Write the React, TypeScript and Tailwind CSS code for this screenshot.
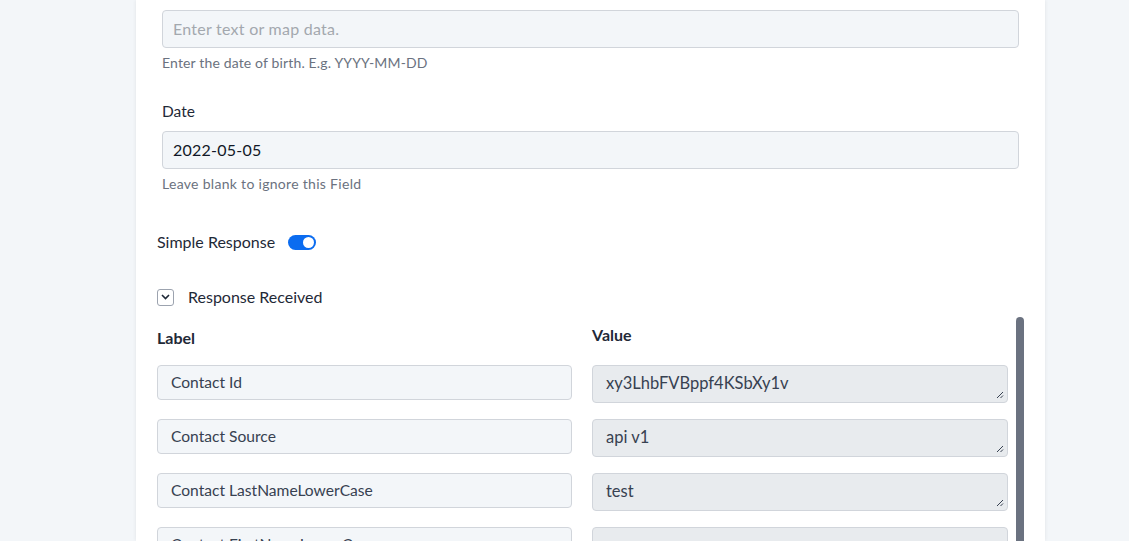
import React from "react";

const rows = [
  { label: "Contact Id", value: "xy3LhbFVBppf4KSbXy1v" },
  { label: "Contact Source", value: "api v1" },
  { label: "Contact LastNameLowerCase", value: "test" },
  { label: "Contact FirstNameLowerCase", value: "" },
];

const ResizeGrip = () => (
  <svg
    width="8"
    height="8"
    viewBox="0 0 8 8"
    className="absolute right-[3px] bottom-[3px]"
  >
    <path d="M7 1 L1 7 M7 4.5 L4.5 7" stroke="#374151" strokeWidth="1" />
  </svg>
);

export default function App() {
  return (
    <div
      className="w-[1129px] h-[541px] overflow-hidden bg-[#f3f6f9] flex"
      style={{ fontFamily: "Lato, 'Liberation Sans', sans-serif" }}
    >
      <div className="ml-[136px] w-[909px] h-full bg-white shadow-[0_0_4px_rgba(0,0,0,0.08)] relative">
        {/* date of birth field */}
        <div className="pl-[26px] pr-[26px] pt-[10px]">
          <div className="h-[38px] rounded-[4px] border border-[#d1d5db] bg-[#f3f6f9] flex items-center px-[10px] text-[16px] text-[#a3a8ae] tracking-[0.25px]">
            Enter text or map data.
          </div>
          <p className="mt-[6px] text-[14px] text-[#6b7280] leading-[18px] tracking-[0.15px]">
            Enter the date of birth. E.g. YYYY-MM-DD
          </p>

          <label className="block mt-[29px] text-[15.5px] text-[#1f2937] leading-[20px]">
            Date
          </label>
          <div className="mt-[10px] h-[38px] rounded-[4px] border border-[#d1d5db] bg-[#f3f6f9] flex items-center px-[10px] text-[16px] text-[#111827] tracking-[0.25px]">
            2022-05-05
          </div>
          <p className="mt-[6px] text-[14px] text-[#6b7280] leading-[18px] tracking-[0.3px]">
            Leave blank to ignore this Field
          </p>
        </div>

        {/* simple response toggle */}
        <div className="pl-[21px] mt-[39px] flex items-center gap-[13px]">
          <span className="text-[16px] text-[#1f2937] leading-[20px]">
            Simple Response
          </span>
          <div className="w-[28px] h-[15px] rounded-full bg-[#0b6cf0] relative">
            <div className="absolute right-[2px] top-[2px] w-[11px] h-[11px] rounded-full bg-white" />
          </div>
        </div>

        {/* response received */}
        <div className="pl-[21px] mt-[35px] flex items-center gap-[14px]">
          <div className="w-[17px] h-[17px] rounded-[3px] border border-[#9ca3af] flex items-center justify-center">
            <svg width="9" height="6" viewBox="0 0 9 6">
              <path
                d="M1 1 L4.5 4.5 L8 1"
                fill="none"
                stroke="#1f2937"
                strokeWidth="1.6"
              />
            </svg>
          </div>
          <span className="text-[16px] text-[#1f2937] leading-[20px]">
            Response Received
          </span>
        </div>

        <div className="pl-[21px] pr-[37px] mt-[18px] grid grid-cols-[415px_416px] gap-x-[20px] items-start">
          <div className="text-[16px] font-bold text-[#1f2937] leading-[20px] pt-[3px]">
            Label
          </div>
          <div className="text-[16px] font-bold text-[#1f2937] leading-[20px]">
            Value
          </div>
          {rows.map((r, i) => (
            <React.Fragment key={i}>
              <div
                className={`${i === 0 ? "mt-[17px]" : "mt-[16px]"} h-[35px] rounded-[4px] border border-[#d1d5db] bg-[#f3f6f9] flex items-center px-[13px] text-[15.6px] text-[#374151]`}
              >
                {r.label}
              </div>
              <div
                className={`${i === 0 ? "mt-[17px]" : "mt-[16px]"} h-[38px] rounded-[4px] border border-[#d1d5db] bg-[#e8ebee] relative px-[13px] pt-[6px] text-[16.5px] text-[#374151] leading-[22px]`}
              >
                {r.value}
                <ResizeGrip />
              </div>
            </React.Fragment>
          ))}
        </div>

        {/* scrollbar thumb */}
        <div className="absolute left-[880px] top-[317px] w-[8px] h-[240px] rounded-t-full bg-[#6b7280]" />
      </div>
    </div>
  );
}
